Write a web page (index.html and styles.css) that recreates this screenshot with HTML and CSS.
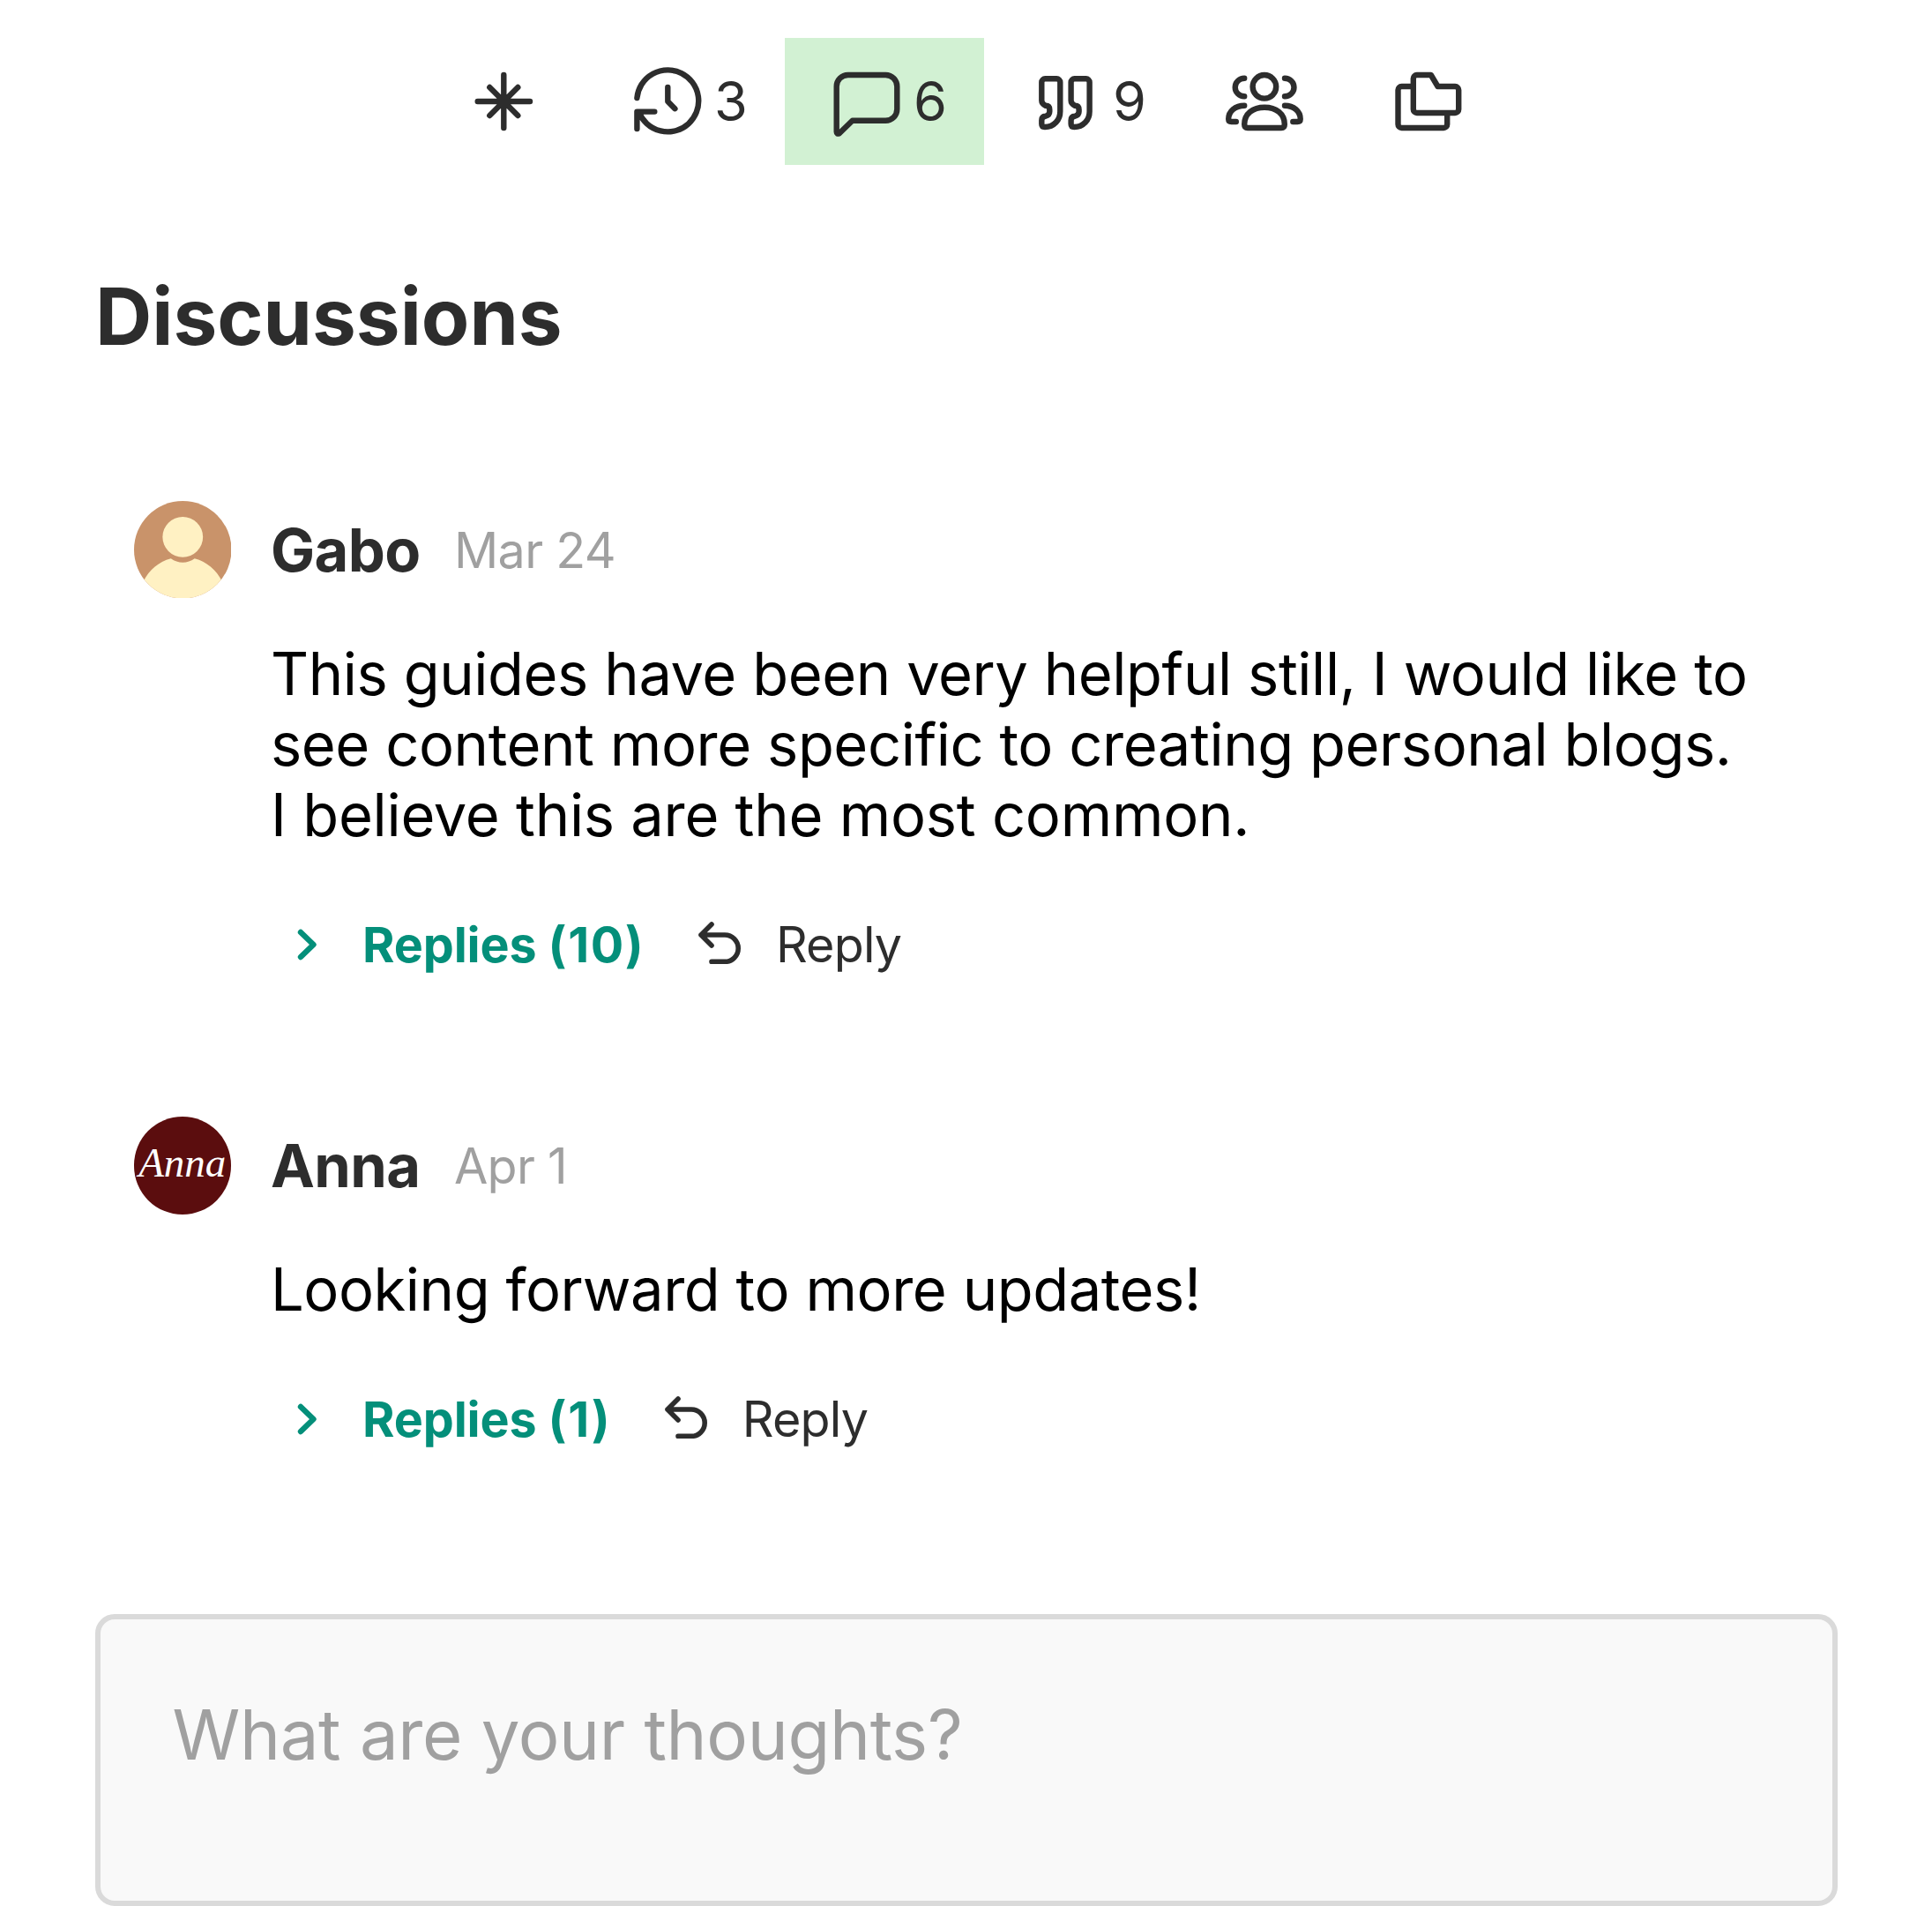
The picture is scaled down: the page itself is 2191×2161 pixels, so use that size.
FILE: index.html
```
<!DOCTYPE html>
<html lang="en">
<head>
<meta charset="utf-8">
<title>Discussions</title>
<link rel="stylesheet" href="styles.css">
</head>
<body>
<main class="panel">
  <nav class="tabs">
    <a class="tab">
      <svg class="tab-icon" viewBox="0 0 96 96"><path d="M18.7 48H78M48.3 18V78M32.3 32L64.3 64M64.3 32L32.3 64"/></svg>
    </a>
    <a class="tab tab-counted">
      <svg class="tab-icon" viewBox="0 0 96 96"><path d="M16.4 44A35 35 0 1 1 18.6 60M36.3 59.6H16.4V79M51.3 32V48L59.4 56.2"/></svg>
      <span class="count">3</span>
    </a>
    <a class="tab tab-counted tab-active">
      <svg class="tab-icon" viewBox="0 0 96 96"><path d="M16.7 31a13 13 0 0 1 13-13H72.3a13 13 0 0 1 13 13V56.7a13 13 0 0 1-13 13H34.7L19.8 84.2Q16.7 85.5 16.7 82.5Z"/></svg>
      <span class="count">6</span>
    </a>
    <a class="tab tab-counted">
      <svg class="tab-icon" viewBox="0 0 96 96"><g id="quote"><path d="M27.3 22.3H40.3a4 4 0 0 1 4 4V59.5C44.3 69 37.3 77 27 77Q23.3 77 23.3 73.5V69.5Q23.3 65 27.8 64.8Q32.3 63.5 32.3 59.5V57.3Q32.3 52.9 27.8 52.8Q23.3 50.5 23.3 47V26.3a4 4 0 0 1 4-4Z"/></g><use href="#quote" x="33.3"/></svg>
      <span class="count">9</span>
    </a>
    <a class="tab">
      <svg class="tab-icon" viewBox="0 0 96 96"><circle cx="47.9" cy="31.3" r="13.3"/><path d="M25.2 74C25.2 62 35 54.7 48 54.7S70.8 62 70.8 74Q70.8 78 67 78H29Q25.2 78 25.2 74ZM25.2 21.7A10.5 10.3 0 0 0 25.2 42.3M71 21.7A10.5 10.3 0 0 1 71 42.3M25.2 52.7C15 52.7 7.2 59 7.2 68Q7.2 71 10.5 71H15.8M71 52.7C81 52.7 88.7 59 88.7 68Q88.7 71 85.4 71H80.3"/></svg>
    </a>
    <a class="tab">
      <svg class="tab-icon" viewBox="0 0 96 96"><path d="M35.8 18H51.8L59.5 31H79.2a4 4 0 0 1 4 4V57a4 4 0 0 1-4 4H35.8a4 4 0 0 1-4-4V22a4 4 0 0 1 4-4ZM31.8 31H18.5a4 4 0 0 0-4 4V74a4 4 0 0 0 4 4H66.2a4 4 0 0 0 4-4V61"/></svg>
    </a>
  </nav>

  <h1 class="title">Discussions</h1>

  <article class="comment">
    <svg class="avatar" viewBox="0 0 111 111">
      <clipPath id="disc"><circle cx="55.5" cy="55.5" r="55.5"/></clipPath>
      <g clip-path="url(#disc)"><rect width="111" height="111" fill="#c9936a"/><path d="M11 91C17 79 28 69 42 65.5C50 71.5 61 71.5 69 65.5C83 69 94 79 100 91V111H11Z" fill="#fff1c3"/><circle cx="55.5" cy="41" r="23" fill="#fff1c3"/></g>
    </svg>
    <div class="comment-main">
      <header class="byline"><span class="author">Gabo</span><time class="date">Mar 24</time></header>
      <p class="message">This guides have been very helpful still, I would like to<br>see content more specific to creating personal blogs.<br><span class="last-line">I believe this are the most common.</span></p>
      <div class="actions">
        <svg class="chevron" viewBox="0 0 24 36"><path d="M4 4L18.5 18L4 32"/></svg>
        <span class="replies">Replies <span class="total">(10)</span></span>
        <svg class="reply-icon" viewBox="0 0 50 48"><path d="M16 3L4 15L16 27M4 15H31A15.2 15.2 0 0 1 31 45.4H16"/></svg>
        <span class="reply">Reply</span>
      </div>
    </div>
  </article>

  <article class="comment">
    <div class="avatar avatar-anna">Anna</div>
    <div class="comment-main">
      <header class="byline"><span class="author">Anna</span><time class="date">Apr 1</time></header>
      <p class="message">Looking forward to more updates!</p>
      <div class="actions">
        <svg class="chevron" viewBox="0 0 24 36"><path d="M4 4L18.5 18L4 32"/></svg>
        <span class="replies">Replies <span class="total">(1)</span></span>
        <svg class="reply-icon" viewBox="0 0 50 48"><path d="M16 3L4 15L16 27M4 15H31A15.2 15.2 0 0 1 31 45.4H16"/></svg>
        <span class="reply">Reply</span>
      </div>
    </div>
  </article>

  <div class="composer"><span class="placeholder">What are your thoughts?</span></div>
</main>
</body>
</html>
```
FILE: styles.css
```
* { box-sizing: border-box; }

body {
  margin: 0;
  background: #fff;
  color: #2d2d2d;
  font-family: Inter, "Liberation Sans", sans-serif;
}

.panel {
  height: 2161px;
  padding: 43px 107px 0 108px;
  overflow: hidden;
}

/* Tab bar */
.tabs {
  display: flex;
  width: 1233px;
  height: 144.4px;
  margin-left: 371px;
}

.tab {
  display: flex;
  flex: 0 0 185px;
  align-items: center;
  justify-content: center;
  padding: 0.6px 1px 0 0;
}

.tab-counted {
  flex-basis: 226px;
  justify-content: flex-start;
  gap: 8px;
  padding-left: 42px;
}

.tab-active { background: #d2f1d3; }

.tab-icon {
  width: 96px;
  height: 96px;
}

.tab-icon,
.chevron,
.reply-icon {
  flex: none;
  fill: none;
  stroke: #2d2d2d;
  stroke-width: 6.4;
  stroke-linecap: round;
  stroke-linejoin: round;
}

.count {
  font-size: 61.2px;
  line-height: 74px;
}

.title {
  margin: 117.6px 0 0;
  font-size: 89px;
  font-weight: 700;
  line-height: 108px;
}

/* Comments */
.comment {
  display: flex;
  gap: 45px;
  padding-left: 43.5px;
}

.title + .comment { margin-top: 155px; }
.comment + .comment { margin-top: 161.3px; }

.avatar {
  flex: none;
  width: 110.5px;
  height: 110.5px;
}

.avatar-anna {
  border-radius: 50%;
  background: #5b0d0e;
  color: #fff;
  font: italic 47px/105px "Liberation Serif", serif;
  text-align: center;
}

.byline {
  display: flex;
  align-items: center;
  gap: 38.5px;
  height: 110.5px;
  padding-top: 1px;
}

.author {
  font-size: 66.8px;
  font-weight: 700;
  letter-spacing: -0.6px;
}

.date {
  color: #a0a0a0;
  font-size: 55.6px;
  letter-spacing: -0.7px;
}

.message {
  margin: 45.5px 0 0;
  color: #000;
  font-size: 66.8px;
  letter-spacing: -0.42px;
  line-height: 80px;
  white-space: nowrap;
}

.last-line { letter-spacing: -0.25px; }

.actions {
  display: flex;
  align-items: center;
  height: 68px;
  margin-top: 72.8px;
  padding-left: 30px;
  font-size: 55.6px;
  line-height: 68px;
}

.chevron {
  width: 24px;
  height: 36px;
  stroke: #048f7a;
}

.replies {
  margin-left: 50px;
  color: #048f7a;
  font-weight: 700;
  letter-spacing: -0.12px;
}

.total { letter-spacing: 1.6px; }

.reply-icon {
  width: 50px;
  height: 48px;
  margin: 0 0 4px 60px;
  stroke-width: 5.6;
}

.reply {
  margin-left: 38.5px;
  letter-spacing: -0.8px;
}

/* Composer */
.composer {
  height: 331px;
  margin-top: 187px;
  padding: 83px 82px 0 81.5px;
  border: 6px solid #dadada;
  border-radius: 22px;
  background: #f9f9f9;
}

.placeholder {
  color: #a0a0a0;
  font-size: 77.9px;
  letter-spacing: -0.31px;
  line-height: 96px;
}
```
